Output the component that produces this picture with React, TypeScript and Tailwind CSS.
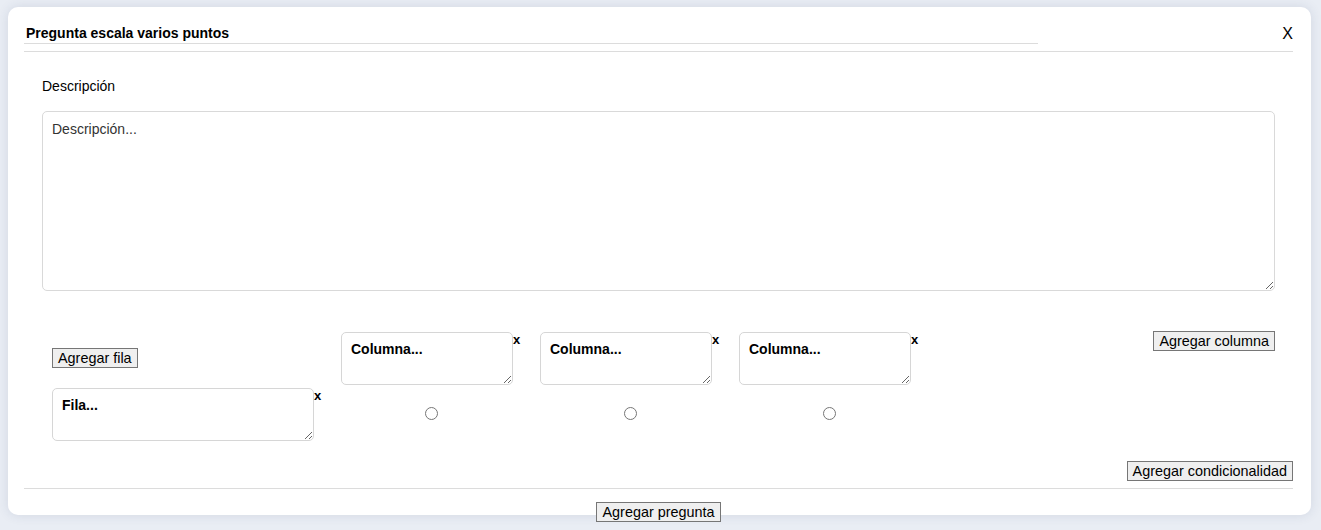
const btn =
  "bg-[#efefef] border border-[#767676] px-[5px] py-[1px] text-[14.4px] leading-[16px] text-black font-['Liberation_Sans',Arial,sans-serif]";

function CellBox({ placeholder, width }: { placeholder: string; width: string }) {
  return (
    <div className="flex items-start">
      <textarea
        placeholder={placeholder}
        className={`${width} h-[53px] resize rounded-[5px] border border-[#d6d6d6] px-[9px] py-[7px] text-[14px] font-bold leading-[18px] placeholder:text-black outline-none`}
      />
      <span className="mt-[1px] text-[13px] font-bold leading-[14px]">x</span>
    </div>
  );
}

export default function App() {
  const columns = ["Columna...", "Columna...", "Columna..."];

  return (
    <div className="h-[530px] overflow-hidden bg-[#e9edf4] pt-[7px] pl-[8px] font-['Liberation_Sans',Arial,sans-serif] text-black">
      <div className="relative flex h-[508px] w-[1303px] flex-col rounded-[10px] bg-white pl-[16px] pr-[18px] pt-[17px] shadow-[0_0_12px_rgba(40,60,100,0.12)]">
        {/* header */}
        <div className="flex items-start">
          <div className="w-[1014px] border-b border-[#dcdcdc] pl-[2px] pb-[1px] text-[14px] font-bold leading-[18px]">
            Pregunta escala varios puntos
          </div>
          <button className="ml-auto mt-[1px] text-[16px] leading-[17px]">X</button>
        </div>
        <div className="mt-[7px] border-t border-[#dcdcdc]" />

        {/* body */}
        <div className="px-[18px]">
          <label className="mt-[25px] block text-[14px] leading-[18px]">Descripción</label>
          <textarea
            placeholder="Descripción..."
            className="mt-[16px] block h-[180px] w-full resize rounded-[5px] border border-[#d9d9d9] px-[9px] py-[8px] text-[14px] leading-[18px] placeholder:text-[#333] outline-none"
          />

          <div className="mt-[40px] grid grid-cols-[289px_199px_199px_199px_1fr] pl-[10px]">
            <div className="flex items-center">
              <button className={btn}>Agregar fila</button>
            </div>
            {columns.map((c, i) => (
              <div key={i} className="pt-[1px]">
                <CellBox placeholder={c} width="w-[172px]" />
              </div>
            ))}
            <div className="flex items-start justify-end">
              <button className={btn}>Agregar columna</button>
            </div>

            <div className="mt-[3px]">
              <CellBox placeholder="Fila..." width="w-[262px]" />
            </div>
            {columns.map((_, i) => (
              <div key={i} className="flex w-[180px] items-center justify-center pt-[1px]">
                <input type="radio" name="r0" className="h-[13px] w-[13px]" />
              </div>
            ))}
            <div />
          </div>
        </div>

        <div className="mt-[20px] flex justify-end">
          <button className={btn}>Agregar condicionalidad</button>
        </div>
        <div className="mt-[7px] border-t border-[#dcdcdc]" />
        <div className="mt-[13px] flex justify-center">
          <button className={btn}>Agregar pregunta</button>
        </div>
      </div>
    </div>
  );
}
